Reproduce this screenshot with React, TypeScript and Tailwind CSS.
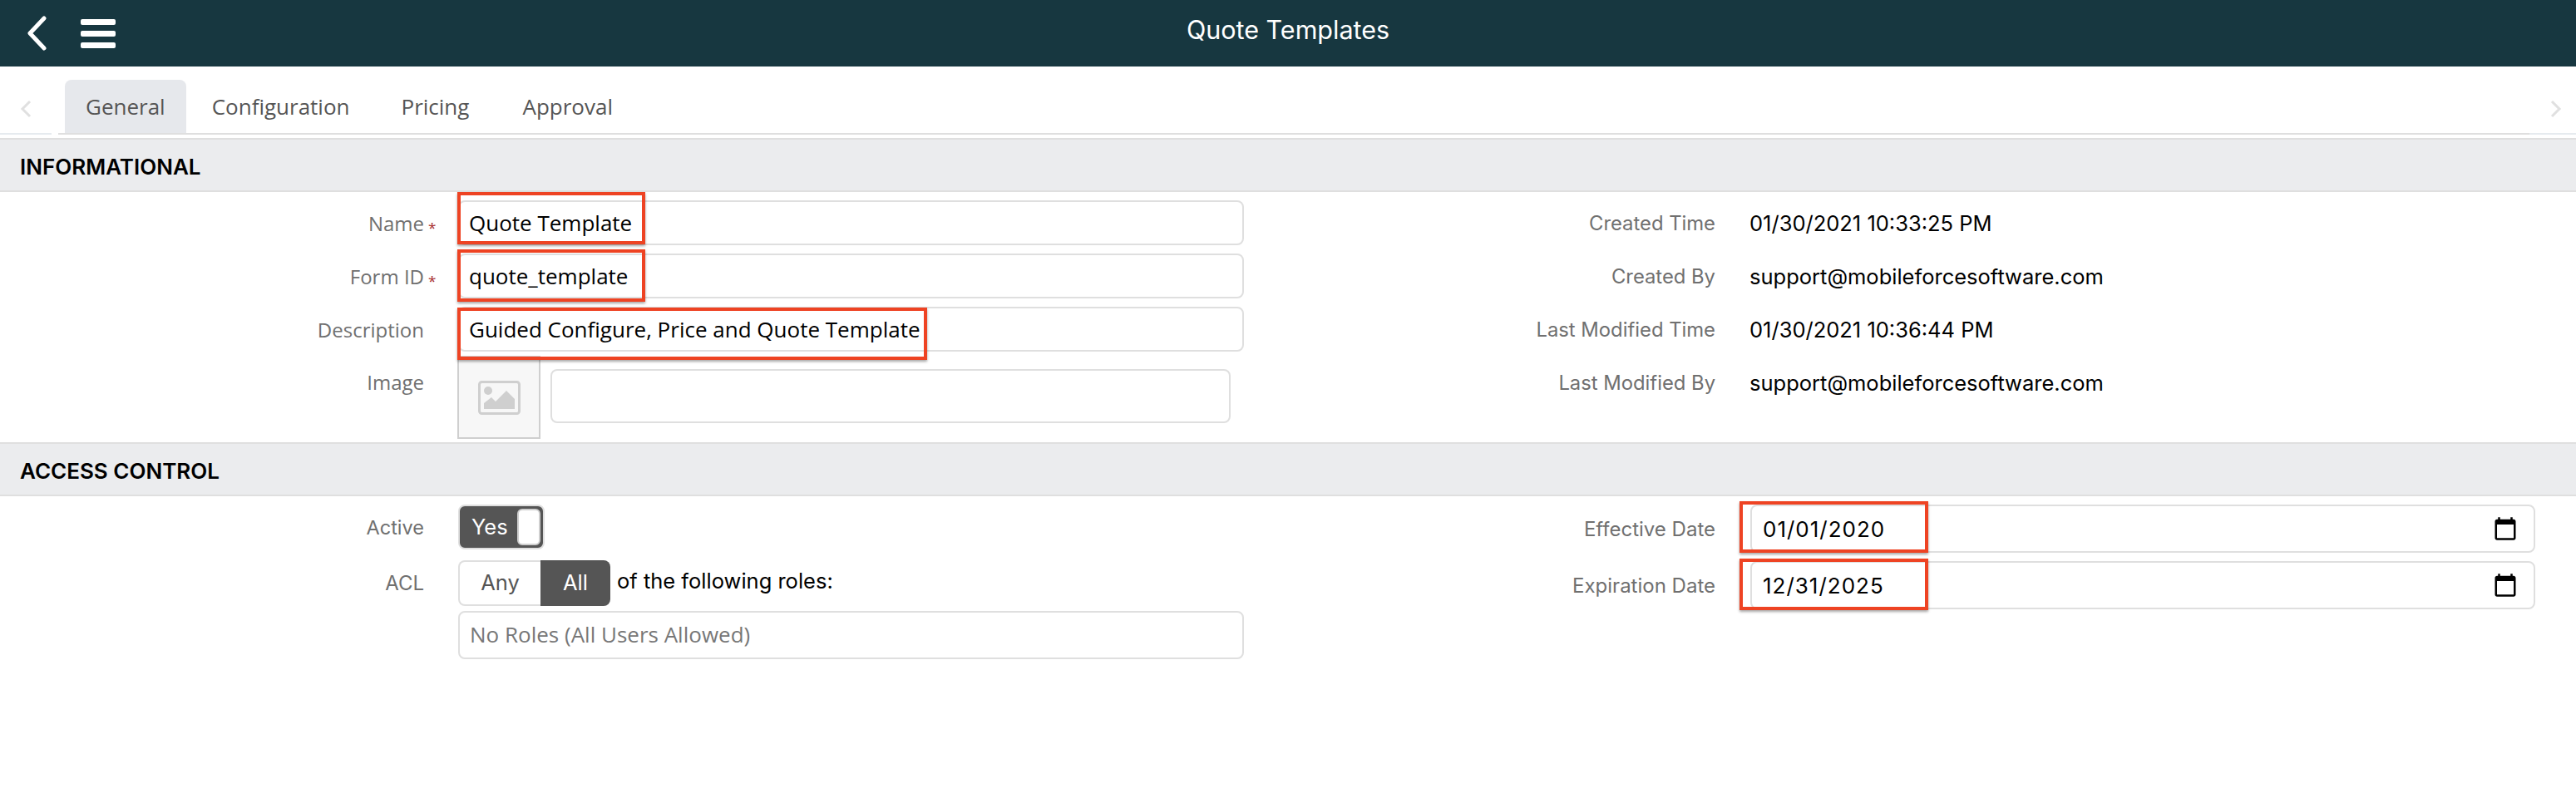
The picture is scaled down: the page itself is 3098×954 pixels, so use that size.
// Quote Templates form: General tab, with the red review marks on top.
const sans = "font-['Open_Sans',sans-serif]";
const sys = "font-['Inter',sans-serif]";
const labelCls = "pt-[2px] text-right text-[24px] text-[#707070]";
const inputCls = "flex items-center rounded-[8px] border-2 border-[#dfdfdf] bg-white text-[26px]";

const tabs = [
  { name: "General", cls: "mr-[6px] bg-[#e6e8ec]" },
  { name: "Configuration", cls: "mr-[12px]" },
  { name: "Pricing", cls: "mr-[14px]" },
  { name: "Approval", cls: "" },
];

function Chevron({ flip }: { flip?: boolean }) {
  return (
    <svg width="14" height="22" viewBox="0 0 14 22" className={flip ? "rotate-180" : ""}>
      <path d="M12 2 3 11l9 9" fill="none" stroke="#e0e0e0" strokeWidth="3" />
    </svg>
  );
}

function CalendarIcon() {
  return (
    <svg width="30" height="30" viewBox="0 0 24 24" fill="#000">
      <path d="M20 3h-1V1h-2v2H7V1H5v2H4c-1.1 0-2 .9-2 2v16c0 1.1.9 2 2 2h16c1.1 0 2-.9 2-2V5c0-1.1-.9-2-2-2zm0 18H4V8h16v13z" />
    </svg>
  );
}

function SectionHeader({ title }: { title: string }) {
  return (
    <div className="flex h-[65px] items-center border-y-2 border-[#dfdfdf] bg-[#ebecee] pl-[24px] pt-[4px]">
      <span className={`${sys} text-[26px] font-semibold text-black`}>{title}</span>
    </div>
  );
}

function LeftRow({ label, required, value }: { label: string; required?: boolean; value: string }) {
  return (
    <div className="flex h-[54px] items-center">
      <span className={`${sans} ${labelCls} w-[510px]`}>{label}</span>
      <span className="w-[41px] pl-[5px] pt-[10px] text-[17px] leading-none text-[#a33]">
        {required ? "*" : ""}
      </span>
      <div className={`${inputCls} ${sans} h-[54px] w-[945px] px-[11px] text-black`}>
        <span>{value}</span>
      </div>
    </div>
  );
}

function InfoRow({ label, value }: { label: string; value: string }) {
  return (
    <div className="flex h-[54px] items-center pt-[2px]">
      <span className={`${sys} w-[514px] text-right text-[23.8px] text-[#707070]`}>{label}</span>
      <span className={`${sys} pl-[41px] text-[25.5px] text-black`}>{value}</span>
    </div>
  );
}

function DateRow({ label, value }: { label: string; value: string }) {
  return (
    <div className="flex items-center">
      <span className={`${sys} ${labelCls} w-[514px]`}>{label}</span>
      <div
        className={`${inputCls} ${sys} ml-[42px] h-[58px] w-[944px] justify-between pl-[13px] pr-[19px] tracking-[1px] text-black`}
      >
        <span>{value}</span>
        <CalendarIcon />
      </div>
    </div>
  );
}

// Red review marks drawn over the screenshot
const marks = [
  "left-[550px] top-[231px] h-[63px] w-[226px]",
  "left-[550px] top-[300px] h-[63px] w-[226px]",
  "left-[550px] top-[370px] h-[63px] w-[565px]",
  "left-[2092px] top-[603px] h-[62px] w-[227px]",
  "left-[2092px] top-[672px] h-[62px] w-[227px]",
];

export default function App() {
  return (
    <div className="relative h-[954px] overflow-hidden bg-white">
      <header className="relative flex h-[80px] items-center bg-[#173740] pl-[32px]">
        <svg width="24" height="42" viewBox="0 0 24 42">
          <path d="M21 3 4 21l17 18" fill="none" stroke="#fff" strokeWidth="5" strokeLinecap="round" strokeLinejoin="round" />
        </svg>
        <div className="ml-[41px] flex w-[42px] flex-col gap-[7px]">
          <div className="h-[7px] rounded-[2px] bg-white" />
          <div className="h-[7px] rounded-[2px] bg-white" />
          <div className="h-[7px] rounded-[2px] bg-white" />
        </div>
        <div className={`${sys} absolute inset-x-0 top-0 text-center text-[30.5px] leading-[72px] text-white`}>
          Quote Templates
        </div>
      </header>

      <nav className="flex h-[80px] items-end">
        <div className="flex h-[58px] w-[78px] items-center self-end pl-[24px]">
          <Chevron />
        </div>
        {tabs.map((t) => (
          <div
            key={t.name}
            className={`${sans} flex h-[64px] items-center rounded-t-[8px] px-[25px] text-[26px] text-[#555] ${t.cls}`}
          >
            {t.name}
          </div>
        ))}
        <div className="ml-auto flex h-[58px] items-center pr-[17px]">
          <Chevron flip />
        </div>
      </nav>
      <div className="flex h-[2px]">
        <div className="w-[62px] bg-[#e6ebef]" />
        <div className="ml-[8px] flex-1 bg-[#dfdfdf]" />
        <div className="w-[56px] bg-[#e6ebef]" />
      </div>

      <div className="mt-[4px]">
        <SectionHeader title="INFORMATIONAL" />
      </div>

      <section className="flex h-[301px] pt-[10px]">
        <div className="flex w-[1549px] flex-col gap-[10px]">
          <LeftRow label="Name" required value="Quote Template" />
          <LeftRow label="Form ID" required value="quote_template" />
          <LeftRow label="Description" value="Guided Configure, Price and Quote Template" />
          <div className="-mt-[5px] flex">
            <span className={`${sans} w-[510px] pt-[14px] text-right text-[24px] text-[#707070]`}>Image</span>
            <div className="ml-[40px] flex h-[100px] w-[100px] items-center justify-center border-2 border-[#cfcfcf] bg-[#f7f7f7]">
              <svg width="51" height="41" viewBox="0 0 51 41">
                <rect x="1.5" y="1.5" width="48" height="38" rx="3" fill="none" stroke="#cfcfcf" strokeWidth="3" />
                <circle cx="12" cy="12" r="5" fill="#cfcfcf" />
                <path d="M7 34v-7l9-7 5 5 13-13 10 10v12z" fill="#cfcfcf" />
              </svg>
            </div>
            <div className="ml-[12px] mt-[16px] h-[65px] w-[818px] rounded-[8px] border-2 border-[#dfdfdf]" />
          </div>
        </div>
        <div className="flex flex-1 flex-col gap-[10px]">
          <InfoRow label="Created Time" value="01/30/2021 10:33:25 PM" />
          <InfoRow label="Created By" value="support@mobileforcesoftware.com" />
          <InfoRow label="Last Modified Time" value="01/30/2021 10:36:44 PM" />
          <InfoRow label="Last Modified By" value="support@mobileforcesoftware.com" />
        </div>
      </section>

      <SectionHeader title="ACCESS CONTROL" />

      <section className="flex pt-[10px]">
        <div className="flex w-[1549px] flex-col">
          <div className="flex items-center">
            <span className={`${sys} pt-[2px] text-right text-[23.5px] text-[#707070] w-[510px]`}>Active</span>
            <div className="ml-[41px] flex h-[54px] w-[104px] items-center justify-between rounded-[8px] border-2 border-[#dfdfdf] bg-[#555] pl-[14px] pr-[3px]">
              <span className={`${sys} text-[25.5px] text-white`}>Yes</span>
              <div className="h-[44px] w-[28px] rounded-[6px] border-2 border-[#cfcfcf] bg-white" />
            </div>
          </div>
          <div className="mt-[13px] flex items-center">
            <span className={`${sys} w-[510px] text-right text-[24px] text-[#707070]`}>ACL</span>
            <div className="ml-[41px] flex h-[55px] w-[183px]">
              <div className={`${sys} flex w-[99px] items-center justify-center rounded-l-[8px] border-2 border-r-0 border-[#dfdfdf] text-[25.5px] text-[#555]`}>Any</div>
              <div className={`${sys} flex flex-1 items-center justify-center rounded-r-[8px] bg-[#555] text-[25.5px] text-white`}>All</div>
            </div>
            <span className={`${sys} ml-[8px] -mt-[4px] text-[25.5px] text-black`}>of the following roles:</span>
          </div>
          <div className={`${inputCls} ${sans} ml-[551px] mt-[6px] h-[58px] w-[945px] pb-[2px] pl-[12px] text-[#777]`}>
            No Roles (All Users Allowed)
          </div>
        </div>
        <div className="flex flex-1 flex-col gap-[10px]">
          <DateRow label="Effective Date" value="01/01/2020" />
          <DateRow label="Expiration Date" value="12/31/2025" />
        </div>
      </section>

      {marks.map((m) => (
        <div
          key={m}
          className={`absolute border-[4px] border-[#ee4323] shadow-[0_2px_3px_rgba(0,0,0,0.35)] ${m}`}
        />
      ))}
    </div>
  );
}
